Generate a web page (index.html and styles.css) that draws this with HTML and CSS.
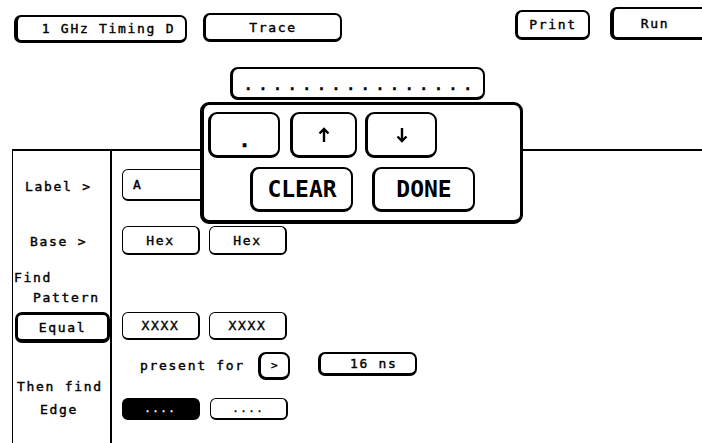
FILE: index.html
```html
<!DOCTYPE html>
<html lang="en">
<head>
    <meta charset="UTF-8">
    <title>Timing Trigger</title>
    <link rel="stylesheet" href="styles.css">
</head>
<body>
    <div class="topbar">
        <div class="btn btn-analyzer">1 GHz Timing D</div>
        <div class="btn btn-trace">Trace</div>
        <div class="btn btn-print">Print</div>
        <div class="btn btn-run">Run</div>
    </div>

    <div class="main">
        <div class="labels">
            <div class="lbl lbl-label">Label &gt;</div>
            <div class="lbl lbl-base">Base &gt;</div>
            <div class="lbl lbl-find">Find</div>
            <div class="lbl lbl-pattern">Pattern</div>
            <div class="btn btn-equal">Equal</div>
            <div class="lbl lbl-then">Then find</div>
            <div class="lbl lbl-edge">Edge</div>
        </div>

        <div class="fields">
            <div class="btn-thin field-a">A</div>
            <div class="row row-base">
                <div class="btn-thin small">Hex</div>
                <div class="btn-thin small">Hex</div>
            </div>
            <div class="row row-pattern">
                <div class="btn-thin small">XXXX</div>
                <div class="btn-thin small">XXXX</div>
            </div>
            <div class="row row-present">
                <span class="present">present for</span>
                <div class="btn btn-gt">&gt;</div>
                <div class="btn btn-time">16 ns</div>
            </div>
            <div class="row row-edge">
                <div class="btn-thin edge edge-on">....</div>
                <div class="btn-thin edge">....</div>
            </div>
        </div>
    </div>

    <!-- pattern entry popup -->
    <div class="popup">
        <div class="btn entry">................</div>
        <div class="keypad">
            <div class="keys">
                <div class="btn key key-dot">.</div>
                <div class="btn key key-up">
                    <svg width="12" height="16" viewBox="0 0 12 16">
                        <path d="M6 15V2M1.5 6.5L6 2l4.5 4.5" fill="none" stroke="#000" stroke-width="2.4"/>
                    </svg>
                </div>
                <div class="btn key key-down">
                    <svg width="12" height="16" viewBox="0 0 12 16">
                        <path d="M6 1v13M1.5 9.5L6 14l4.5-4.5" fill="none" stroke="#000" stroke-width="2.4"/>
                    </svg>
                </div>
            </div>
            <div class="keys keys-big">
                <div class="btn key-big">CLEAR</div>
                <div class="btn key-big key-done">DONE</div>
            </div>
        </div>
    </div>
</body>
</html>
```
FILE: styles.css
```css
body {
    margin: 0;
    width: 702px;
    height: 443px;
    overflow: hidden;
    position: relative;
    background-color: #fff;
    color: #000;
    font-family: "DejaVu Sans Mono", "Liberation Mono", monospace;
    font-size: 13px;
    letter-spacing: 1.7px;
    -webkit-text-stroke: 0.4px #000;
}

.btn,
.btn-thin {
    box-sizing: border-box;
    display: flex;
    align-items: center;
    justify-content: center;
    background-color: #fff;
    flex-shrink: 0;
}

.btn {
    border: 2px solid #000;
    border-left-width: 3px;
    border-bottom-width: 3px;
    border-radius: 7px;
}

.btn-thin {
    border: 1px solid #000;
    border-right-width: 2px;
    border-bottom-width: 2px;
    border-radius: 6px;
}

/* top bar */
.topbar {
    display: flex;
    align-items: flex-start;
    height: 149px;
}

.btn-analyzer {
    margin: 15px 0 0 14px;
    width: 173px;
    height: 28px;
    padding-left: 14px;
    border-left-width: 4px;
}

.btn-trace {
    margin: 13px 0 0 16px;
    width: 139px;
    height: 29px;
}

.btn-print {
    margin: 10px 0 0 173px;
    width: 75px;
    height: 30px;
}

.btn-run {
    margin: 7px 0 0 20px;
    width: 102px;
    height: 33px;
    padding-right: 14px;
    border-left-width: 4px;
}

/* main area */
.main {
    display: grid;
    grid-template-columns: 100px 1fr;
    margin-left: 12px;
    height: 294px;
}

.labels {
    box-sizing: border-box;
    display: flex;
    flex-direction: column;
    align-items: flex-start;
    border-left: 1px solid #000;
    border-top: 2px solid #000;
    border-right: 2px solid #000;
}

.lbl {
    line-height: 16px;
}

.lbl-label { margin: 28px 0 0 12px; }
.lbl-base { margin: 39px 0 0 17px; }
.lbl-find { margin: 20px 0 0 1px; }
.lbl-pattern { margin: 4px 0 0 20px; }
.lbl-then { margin: 36px 0 0 4px; }
.lbl-edge { margin: 7px 0 0 27px; }

.btn-equal {
    margin: 6px 0 0 2px;
    width: 95px;
    height: 31px;
    border-width: 3px 3px 4px 3px;
}

.fields {
    border-top: 2px solid #000;
    padding-left: 10px;
    display: flex;
    flex-direction: column;
    align-items: flex-start;
}

.row {
    display: flex;
    align-items: flex-start;
}

.field-a {
    margin-top: 18px;
    width: 100px;
    height: 32px;
    justify-content: flex-start;
    padding-left: 10px;
}

.small {
    width: 78px;
    height: 29px;
    margin-right: 9px;
}

.row-base { margin-top: 25px; }

.row-pattern { margin-top: 57px; }
.row-pattern .small { height: 28px; }

.row-present {
    margin-top: 12px;
    height: 28px;
}

.present {
    margin: 6px 13px 0 18px;
    line-height: 16px;
}

.btn-gt {
    width: 32px;
    height: 28px;
    border-radius: 8px;
    font-size: 11px;
    letter-spacing: 0;
}

.btn-time {
    margin-left: 28px;
    width: 99px;
    height: 24px;
    padding-left: 12px;
}

.row-edge { margin-top: 18px; }

.edge {
    width: 78px;
    height: 22px;
    margin-right: 10px;
    font-size: 10px;
    letter-spacing: 2px;
}

.edge-on {
    background-color: #000;
    color: #fff;
    -webkit-text-stroke: 0.4px #fff;
}

/* popup keypad */
.popup {
    position: absolute;
    left: 200px;
    top: 67px;
    width: 323px;
}

.entry {
    margin-left: 30px;
    width: 255px;
    height: 33px;
    justify-content: flex-start;
    align-items: flex-start;
    padding: 8px 0 0 11px;
    font-size: 14px;
    font-weight: bold;
    line-height: 16px;
    letter-spacing: 6.2px;
    border-radius: 8px;
}

.keypad {
    box-sizing: border-box;
    margin-top: 2px;
    height: 122px;
    background-color: #fff;
    border: 3px solid #000;
    border-left-width: 4px;
    border-bottom-width: 4px;
    border-radius: 9px;
    padding: 7px 0 0 4px;
}

.keys {
    display: flex;
    align-items: flex-start;
}

.key {
    height: 46px;
    border-radius: 9px;
    font-size: 20px;
    font-weight: bold;
    letter-spacing: 0;
}

.key-dot { width: 72px; margin-right: 10px; padding-top: 10px; }
.key-up { width: 67px; margin-right: 8px; }
.key-down { width: 72px; }

.keys-big {
    margin: 9px 0 0 42px;
}

.key-big {
    width: 103px;
    height: 45px;
    border-radius: 9px;
    font-size: 23px;
    font-weight: bold;
    letter-spacing: 0;
    -webkit-text-stroke: 0;
}

.key-done { margin-left: 19px; }
```
